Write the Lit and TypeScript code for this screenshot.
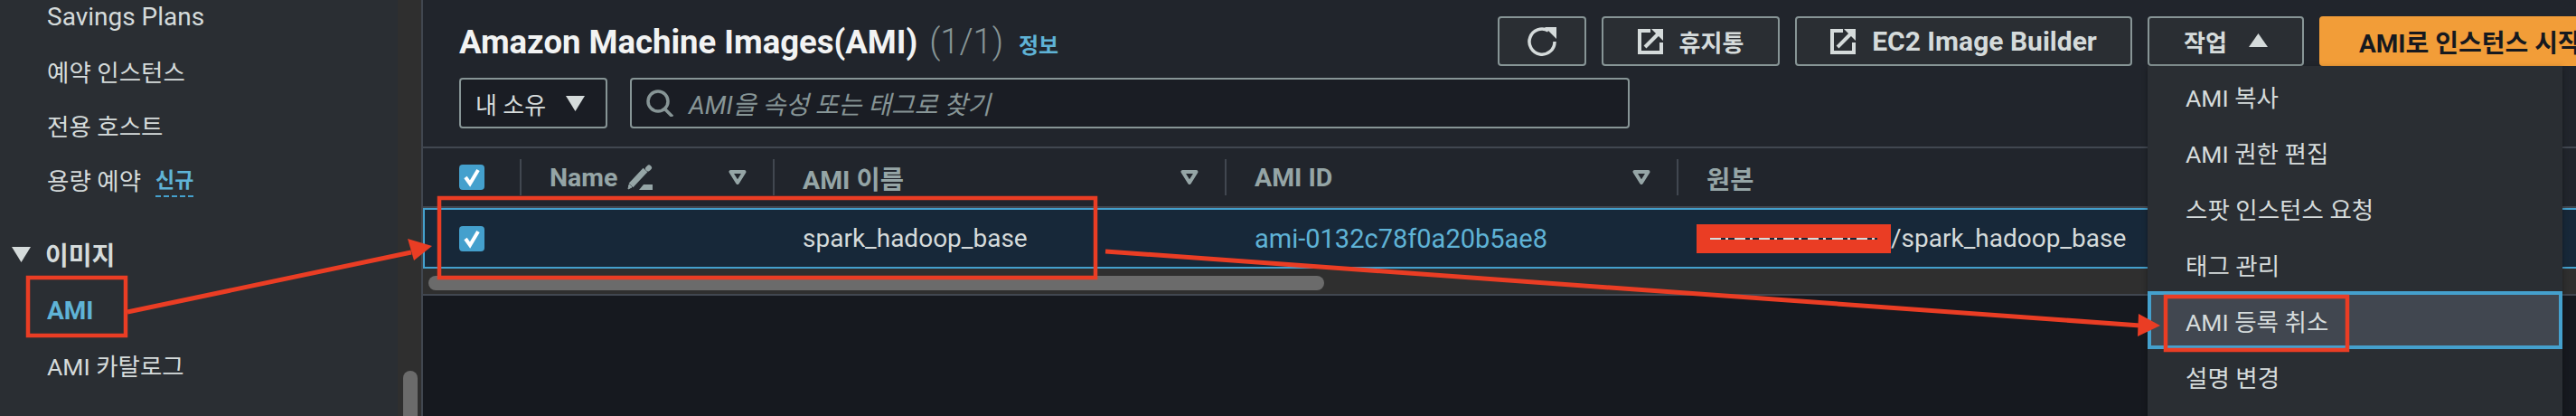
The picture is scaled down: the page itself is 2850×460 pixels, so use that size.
import { LitElement, html, css, svg } from 'lit';
import { customElement } from 'lit/decorators.js';

const externalIcon = html`<svg class="ext" viewBox="0 0 28 28" fill="none" stroke="currentColor" stroke-width="4">
  <path d="M14 2H2v24h24V15" />
  <path d="M8 20 22 6" />
  <path d="M15 0h13v13z" fill="currentColor" stroke="none" />
</svg>`;

const menuItems = ['AMI 복사', 'AMI 권한 편집', '스팟 인스턴스 요청', '태그 관리', 'AMI 등록 취소', '설명 변경'];

@customElement('app-root')
export class AppRoot extends LitElement {
  static styles = css`
    :host {
      display: block;
      position: relative;
      width: 2850px;
      height: 460px;
      overflow: hidden;
      background: #16191f;
      color: #d5dbdb;
      font-family: Roboto, 'Noto Sans CJK KR', sans-serif;
      font-size: 28px;
    }
    .page {
      display: flex;
      height: 460px;
    }
    /* sidebar */
    .side {
      width: 440px;
      flex: none;
      box-sizing: border-box;
      background: #2a2e33;
      padding-left: 52px;
      color: #d5dbdb;
    }
    .nav {
      display: flex;
      align-items: center;
      gap: 16px;
      height: 60px;
      font-size: 26.5px;
      white-space: nowrap;
    }
    .nav.en {
      font-size: 28px;
      margin-top: -12px;
    }
    .new {
      color: #5fb3d6;
      font-size: 23px;
      font-weight: 700;
      border-bottom: 2px dashed #44a0cd;
      line-height: 32px;
      margin-top: 6px;
    }
    .group {
      display: flex;
      align-items: center;
      gap: 16px;
      height: 60px;
      margin: 23px 0 0 -39px;
      font-weight: 700;
    }
    .nav.active {
      color: #5fb3d6;
      font-size: 28px;
      font-weight: 700;
      margin-top: 2px;
    }
    .gutter {
      position: relative;
      width: 26px;
      flex: none;
      background: #2f2f2f;
      border-right: 2px solid #414750;
    }
    .thumb {
      position: absolute;
      left: 6px;
      top: 410px;
      width: 16px;
      height: 80px;
      border-radius: 8px;
      background: #6b6b6b;
    }
    /* main */
    .main {
      flex: 1;
      min-width: 0;
      overflow: hidden;
    }
    .panel {
      background: #21252c;
    }
    .head {
      display: flex;
      align-items: center;
      height: 55px;
      padding: 18px 0 0 40px;
      margin-right: -46px;
    }
    .title {
      flex: 1;
      display: flex;
      align-items: baseline;
      white-space: nowrap;
    }
    .title h1 {
      margin: 0;
      font-size: 36.5px;
      line-height: 40px;
      font-weight: 700;
      color: #f2f3f3;
    }
    .count {
      font-size: 38px;
      font-weight: 300;
      color: #879596;
      margin-left: 13px;
    }
    .info {
      font-size: 24px;
      font-weight: 700;
      color: #5fb3d6;
      margin-left: 17px;
    }
    .actions {
      display: flex;
      gap: 17px;
      flex: none;
    }
    .btn {
      position: relative;
      box-sizing: border-box;
      display: flex;
      align-items: center;
      justify-content: center;
      gap: 18px;
      height: 55px;
      border: 2px solid #879596;
      border-radius: 4px;
      background: #2a2e33;
      font-size: 26px;
      font-weight: 700;
      white-space: nowrap;
    }
    .btn.refresh { width: 98px; }
    .btn.trash { width: 197px; }
    .btn.builder { width: 373px; font-size: 30px; }
    .btn.action { width: 173px; gap: 24px; }
    .btn.primary {
      width: 330px;
      justify-content: flex-start;
      padding-left: 42px;
      background: #f29d38;
      border-color: #f29d38;
      color: #16191f;
      font-size: 28px;
    }
    .ext {
      width: 28px;
      height: 28px;
      flex: none;
    }
    .tools {
      display: flex;
      gap: 25px;
      padding: 13px 0 20px 40px;
    }
    .select, .search {
      box-sizing: border-box;
      height: 56px;
      display: flex;
      align-items: center;
      border: 2px solid #879596;
      border-radius: 4px;
      background: #1a1d24;
    }
    .select {
      width: 164px;
      padding-left: 16px;
      gap: 22px;
      font-size: 26px;
    }
    .search {
      width: 1106px;
      padding-left: 16px;
      gap: 16px;
      font-style: italic;
      font-size: 28px;
      color: #879596;
    }
    .search svg {
      width: 31px;
      height: 30px;
    }
    .grid {
      display: grid;
      grid-template-columns: 107px 280px 500px 500px 1fr;
    }
    .thead {
      box-sizing: border-box;
      height: 68px;
      border-top: 2px solid #414750;
      border-bottom: 2px solid #414750;
      align-items: center;
      color: #95a5a6;
      font-weight: 700;
      font-size: 28.5px;
    }
    .th {
      display: flex;
      align-items: center;
      height: 40px;
      padding: 0 29px 0 31px;
      border-left: 2px solid #414750;
      box-sizing: border-box;
    }
    .th:first-child {
      border-left: none;
      padding-left: 40px;
    }
    .th .sort {
      margin-left: auto;
    }
    .pencil {
      width: 28px;
      height: 28px;
      margin-left: 11px;
    }
    .row {
      height: 67px;
      box-sizing: border-box;
      align-items: center;
      background: #172839;
      border: 2px solid #44a0cd;
      border-right: none;
      font-size: 28px;
      white-space: nowrap;
    }
    .td {
      padding-left: 31px;
    }
    .td:first-child {
      padding-left: 38px;
      display: flex;
    }
    .td.link {
      color: #5fb3d6;
      font-size: 29px;
    }
    .td.source {
      display: flex;
      align-items: center;
      padding-left: 20px;
    }
    .check {
      width: 28px;
      height: 28px;
      border-radius: 4px;
      background: #44a0cd;
      display: block;
    }
    .redact {
      display: flex;
      align-items: center;
      justify-content: center;
      width: 215px;
      height: 32px;
      background: #ea3d24;
    }
    .redact::before {
      content: '';
      width: 185px;
      height: 2px;
      background: repeating-linear-gradient(90deg, #d5dbdb 0 12px, #172839 12px 17px, #d5dbdb 17px 20px, #172839 20px 27px);
    }
    .track {
      box-sizing: border-box;
      height: 30px;
      padding: 8px 0 0 6px;
      background: #2f2f2f;
      border-bottom: 2px solid #414750;
    }
    .bar {
      width: 991px;
      height: 16px;
      border-radius: 8px;
      background: #6b6b6b;
    }
    /* dropdown */
    .menu {
      position: absolute;
      z-index: 2;
      left: -2px;
      top: 53px;
      width: 459px;
      height: 400px;
      padding-top: 2px;
      background: #2a2e33;
      box-shadow: 0 2px 6px rgba(0, 0, 0, 0.35);
      font-size: 26.5px;
      font-weight: 400;
      color: #d5dbdb;
    }
    .item {
      display: flex;
      align-items: center;
      box-sizing: border-box;
      height: 62px;
      padding-left: 42px;
    }
    .item.focus {
      height: 64px;
      margin: -1px 0;
      background: #414750;
      box-shadow: inset 0 0 0 4px #44a0cd;
    }
    .marks {
      position: absolute;
      z-index: 3;
      left: 0;
      top: 0;
      width: 2850px;
      height: 460px;
      pointer-events: none;
    }
  `;

  private caret(kind: 'down' | 'up' | 'hollow') {
    if (kind === 'hollow') {
      return html`<svg class="sort" width="20" height="16" viewBox="0 0 20 16" fill="none" stroke="#95a5a6" stroke-width="4" stroke-linejoin="round"><path d="M2.500 2h15L10 14z" /></svg>`;
    }
    const d = kind === 'down' ? 'M0 0h21L10.5 17z' : 'M0 15h21L10.5 0z';
    return html`<svg width="21" height="17" viewBox="0 0 21 17" fill="#d5dbdb"><path d="${d}" /></svg>`;
  }

  private checkbox() {
    return html`<svg class="check" viewBox="0 0 28 28" fill="none" stroke="#fff" stroke-width="4"><path d="M7 14l5 7 9-15" /></svg>`;
  }

  private annotations() {
    const boxes = [
      [31, 307, 108, 64],
      [486, 219, 726, 88],
      [2396, 328, 201, 59],
    ];
    return svg`
      ${boxes.map(([x, y, w, h]) => svg`<rect x="${x}" y="${y}" width="${w}" height="${h}" fill="none" stroke="#ea3d24" stroke-width="4.5" />`)}
      <path d="M141 345 455 279" stroke="#ea3d24" stroke-width="5" />
      <path d="M478 272 451 264 458 288z" fill="#ea3d24" />
      <path d="M1223 278 2368 360" stroke="#ea3d24" stroke-width="5" />
      <path d="M2390 360 2366 347 2365 372z" fill="#ea3d24" />
    `;
  }

  protected render() {
    return html`
      <div class="page">
        <aside class="side">
          <div class="nav en">Savings Plans</div>
          <div class="nav">예약 인스턴스</div>
          <div class="nav">전용 호스트</div>
          <div class="nav">용량 예약 <span class="new">신규</span></div>
          <div class="group">${this.caret('down')}<span>이미지</span></div>
          <div class="nav active">AMI</div>
          <div class="nav">AMI 카탈로그</div>
        </aside>
        <div class="gutter"><div class="thumb"></div></div>
        <main class="main">
          <section class="panel">
            <div class="head">
              <div class="title">
                <h1>Amazon Machine Images(AMI)</h1>
                <span class="count">(1/1)</span>
                <span class="info">정보</span>
              </div>
              <div class="actions">
                <div class="btn refresh">
                  <svg width="34" height="34" viewBox="0 0 34 34" fill="none" stroke="#d5dbdb" stroke-width="3.500"><path d="M31 17A14 14 0 1 1 24 5" /><path d="M20 1h13v13z" fill="#d5dbdb" stroke="none" /></svg>
                </div>
                <div class="btn trash">${externalIcon}<span>휴지통</span></div>
                <div class="btn builder">${externalIcon}<span>EC2 Image Builder</span></div>
                <div class="btn action">
                  <span>작업</span>${this.caret('up')}
                  <div class="menu">
                    ${menuItems.map((m, i) => html`<div class="item ${i === 4 ? 'focus' : ''}">${m}</div>`)}
                  </div>
                </div>
                <div class="btn primary">AMI로 인스턴스 시작</div>
              </div>
            </div>
            <div class="tools">
              <div class="select"><span>내 소유</span>${this.caret('down')}</div>
              <div class="search">
                <svg viewBox="0 0 31 30" fill="none" stroke="#879596" stroke-width="3.500"><circle cx="13" cy="13" r="11" /><path d="M20 21l9 9" /></svg>
                <span>AMI을 속성 또는 태그로 찾기</span>
              </div>
            </div>
            <div class="grid thead">
              <div class="th">${this.checkbox()}</div>
              <div class="th">
                Name
                <svg class="pencil" viewBox="0 0 28 28" fill="none" stroke="#95a5a6"><path d="M4 23 20 6" stroke-width="6.500" /><path d="M24 3.500l-1 1" stroke-width="6" stroke-linecap="round" /><path d="M1 27l1-5 3 3z" fill="#95a5a6" stroke-width="1" /><path d="M13 28l5-6h10v6z" fill="#95a5a6" stroke="none" /></svg>
                ${this.caret('hollow')}
              </div>
              <div class="th">AMI 이름 ${this.caret('hollow')}</div>
              <div class="th">AMI ID ${this.caret('hollow')}</div>
              <div class="th">원본</div>
            </div>
            <div class="grid row">
              <div class="td">${this.checkbox()}</div>
              <div class="td"></div>
              <div class="td">spark_hadoop_base</div>
              <div class="td link">ami-0132c78f0a20b5ae8</div>
              <div class="td source"><span class="redact"></span>/spark_hadoop_base</div>
            </div>
            <div class="track"><div class="bar"></div></div>
          </section>
        </main>
      </div>
      <svg class="marks" viewBox="0 0 2850 460">${this.annotations()}</svg>
    `;
  }
}

declare global {
  interface HTMLElementTagNameMap {
    'app-root': AppRoot;
  }
}
